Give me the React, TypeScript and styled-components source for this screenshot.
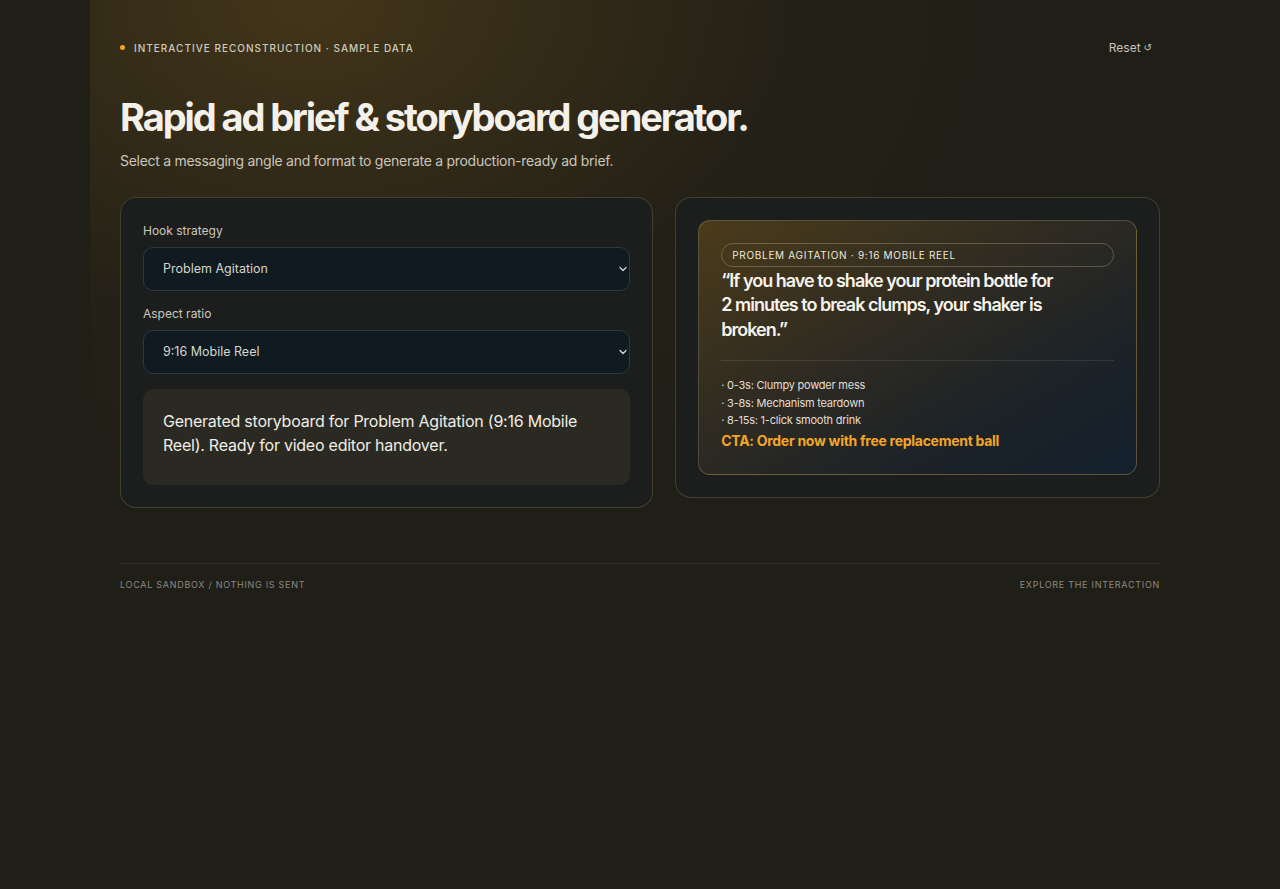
import { useState } from "react";
import styled, { createGlobalStyle } from "styled-components";
import { ChevronDown } from "lucide-react";

const GlobalStyle = createGlobalStyle`
  html, body {
    margin: 0;
    padding: 0;
    background: #1f1e17;
    color: #f1eee6;
    font-family: Inter, "Noto Sans", sans-serif;
    -webkit-font-smoothing: antialiased;
  }
  * { box-sizing: border-box; }
`;

const Page = styled.div`
  min-height: 889px;
  background: #1f1e17;
`;

const Shell = styled.main`
  width: 1100px;
  margin-left: 90px;
  padding: 40px 30px 36px;
  background:
    radial-gradient(ellipse 75% 90% at 20% 0%, rgba(120, 88, 28, 0.4), rgba(60, 45, 20, 0.14) 60%, rgba(31, 30, 23, 0) 100%);
`;

const TopBar = styled.div`
  display: flex;
  align-items: center;
  justify-content: space-between;
`;

const Eyebrow = styled.div`
  display: flex;
  align-items: center;
  gap: 9px;
  font-size: 10px;
  font-weight: 500;
  letter-spacing: 0.1em;
  text-transform: uppercase;
  color: #cfcabd;
`;

const Dot = styled.span`
  width: 5px;
  height: 5px;
  border-radius: 50%;
  background: #f5a524;
`;

const ResetButton = styled.button`
  display: flex;
  align-items: center;
  gap: 3px;
  margin-right: 8px;
  padding: 0;
  background: none;
  border: none;
  font-family: inherit;
  font-size: 12px;
  color: #c7c4bb;
  cursor: pointer;

  &:hover {
    color: #ffffff;
  }
`;

const ResetGlyph = styled.span`
  font-family: "DejaVu Sans", sans-serif;
  font-size: 10px;
`;

const Title = styled.h1`
  margin: 42px 0 0;
  font-size: 38px;
  font-weight: 700;
  letter-spacing: -0.055em;
  line-height: 1.1;
  color: #f4f1ea;
`;

const Subtitle = styled.p`
  margin: 13px 0 0;
  font-size: 14px;
  letter-spacing: -0.02em;
  color: #c9c5bb;
`;

const Grid = styled.div`
  display: grid;
  grid-template-columns: 1.1fr 1fr;
  gap: 22px;
  margin-top: 28px;
  align-items: start;
`;

const Card = styled.section<{ $top?: number }>`
  background: #1b1e1d;
  border: 1px solid rgba(170, 150, 90, 0.28);
  border-radius: 16px;
  padding: ${(p) => p.$top ?? 22}px 22px 22px;
`;

const Field = styled.label`
  display: flex;
  flex-direction: column;
  gap: 9px;
  margin-bottom: 15px;
`;

const FieldLabel = styled.span`
  font-size: 12px;
  color: #cbc7bc;
`;

const SelectWrap = styled.div`
  position: relative;
`;

const Select = styled.select`
  width: 100%;
  height: 44px;
  padding: 0 36px 0 19px;
  appearance: none;
  background: #0f1a21;
  border: 1px solid #2b3a3b;
  border-radius: 10px;
  font-family: inherit;
  font-size: 12.5px;
  color: #d6d4cc;
  cursor: pointer;

  &:focus {
    outline: none;
    border-color: #f5a524;
  }
`;

const Chevron = styled(ChevronDown)`
  position: absolute;
  right: 1px;
  top: 50%;
  transform: translateY(-50%);
  color: #d8d6cf;
  pointer-events: none;
`;

const Summary = styled.div`
  padding: 20px 20px 28px;
  background: #2a2a22;
  border-radius: 10px;
  font-size: 16px;
  line-height: 24px;
  letter-spacing: -0.015em;
  color: #f0ede6;
`;

const Preview = styled.div`
  padding: 22px 22px 25px;
  border: 1px solid rgba(200, 175, 110, 0.32);
  border-radius: 12px;
  background: linear-gradient(150deg, #4b3b1a 0%, #2d2a22 45%, #1b2228 75%, #13202d 100%);
`;

const Pill = styled.div`
  padding: 5px 10px;
  border: 1px solid rgba(220, 200, 150, 0.3);
  border-radius: 999px;
  font-size: 10px;
  font-weight: 400;
  letter-spacing: 0.07em;
  text-transform: uppercase;
  color: #ece8dd;
`;

const Quote = styled.blockquote`
  margin: 2px 0 0;
  max-width: 340px;
  font-size: 18px;
  font-weight: 600;
  line-height: 24.5px;
  letter-spacing: -0.055em;
  color: #f6f3ec;
`;

const Divider = styled.hr`
  margin: 18px 0 16px;
  border: none;
  border-top: 1px solid rgba(255, 255, 255, 0.1);
`;

const Beats = styled.ul`
  margin: 0;
  padding: 0;
  list-style: none;
`;

const Beat = styled.li`
  font-size: 11px;
  line-height: 17.5px;
  letter-spacing: -0.02em;
  color: #e2ded4;

  &::before {
    content: "· ";
  }
`;

const Cta = styled.div`
  margin-top: 2px;
  font-size: 14px;
  font-weight: 700;
  letter-spacing: -0.02em;
  color: #f5a524;
`;

const Footer = styled.footer`
  display: flex;
  justify-content: space-between;
  margin-top: 55px;
  padding-top: 15px;
  border-top: 1px solid rgba(255, 255, 255, 0.08);
  font-size: 9px;
  letter-spacing: 0.08em;
  text-transform: uppercase;
  color: #8c8980;
`;

const hooks = ["Problem Agitation", "Social Proof", "Before & After", "Curiosity Gap"];
const ratios = ["9:16 Mobile Reel", "1:1 Square Feed", "16:9 Landscape"];

const beatsByHook: Record<string, string[]> = {
  "Problem Agitation": ["0-3s: Clumpy powder mess", "3-8s: Mechanism teardown", "8-15s: 1-click smooth drink"],
  "Social Proof": ["0-3s: Gym crowd reaction", "3-8s: Review montage", "8-15s: Product hero shot"],
  "Before & After": ["0-3s: Lumpy old shaker", "3-8s: Swap to new bottle", "8-15s: Silky pour close-up"],
  "Curiosity Gap": ["0-3s: Hidden ball reveal", "3-8s: How it spins", "8-15s: Smooth sip payoff"],
};

const quoteByHook: Record<string, string> = {
  "Problem Agitation":
    "\u201CIf you have to shake your protein bottle for 2 minutes to break clumps, your shaker is broken.\u201D",
  "Social Proof": "\u201C40,000 lifters switched shakers this year. Here\u2019s why.\u201D",
  "Before & After": "\u201CSame scoop, same water. Zero clumps.\u201D",
  "Curiosity Gap": "\u201CThere\u2019s one part inside this bottle nobody talks about.\u201D",
};

export default function App() {
  const [hook, setHook] = useState(hooks[0]);
  const [ratio, setRatio] = useState(ratios[0]);

  const reset = () => {
    setHook(hooks[0]);
    setRatio(ratios[0]);
  };

  const summary = `Generated storyboard for ${hook} (${ratio}). Ready for video editor handover.`;

  return (
    <Page>
      <GlobalStyle />
      <Shell>
        <TopBar>
          <Eyebrow>
            <Dot />
            Interactive reconstruction · sample data
          </Eyebrow>
          <ResetButton onClick={reset}>
            Reset <ResetGlyph>↺</ResetGlyph>
          </ResetButton>
        </TopBar>

        <Title>Rapid ad brief &amp; storyboard generator.</Title>
        <Subtitle>Select a messaging angle and format to generate a production-ready ad brief.</Subtitle>

        <Grid>
          <Card $top={25}>
            <Field>
              <FieldLabel>Hook strategy</FieldLabel>
              <SelectWrap>
                <Select value={hook} onChange={(e) => setHook(e.target.value)}>
                  {hooks.map((h) => (
                    <option key={h}>{h}</option>
                  ))}
                </Select>
                <Chevron size={12} strokeWidth={2.6} />
              </SelectWrap>
            </Field>
            <Field>
              <FieldLabel>Aspect ratio</FieldLabel>
              <SelectWrap>
                <Select value={ratio} onChange={(e) => setRatio(e.target.value)}>
                  {ratios.map((r) => (
                    <option key={r}>{r}</option>
                  ))}
                </Select>
                <Chevron size={12} strokeWidth={2.6} />
              </SelectWrap>
            </Field>
            <Summary>{summary}</Summary>
          </Card>

          <Card>
            <Preview>
              <Pill>{`${hook} · ${ratio}`}</Pill>
              <Quote>{quoteByHook[hook]}</Quote>
              <Divider />
              <Beats>
                {beatsByHook[hook].map((b) => (
                  <Beat key={b}>{b}</Beat>
                ))}
              </Beats>
              <Cta>CTA: Order now with free replacement ball</Cta>
            </Preview>
          </Card>
        </Grid>

        <Footer>
          <span>Local sandbox / nothing is sent</span>
          <span>Explore the interaction</span>
        </Footer>
      </Shell>
    </Page>
  );
}
